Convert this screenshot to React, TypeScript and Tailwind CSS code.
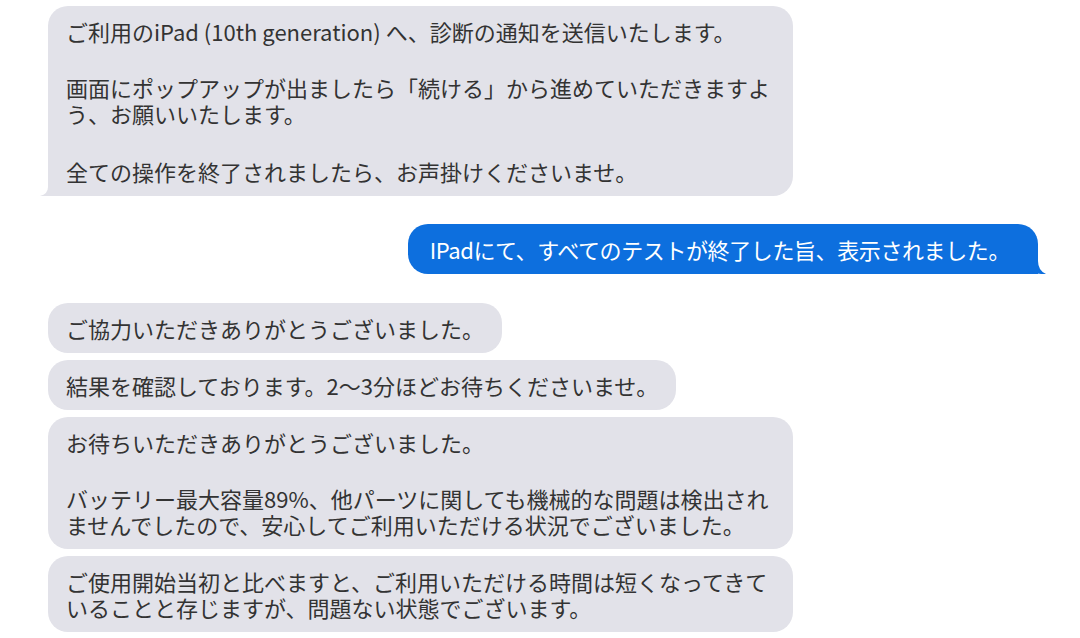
import React from 'react';

const gray = 'bg-[#e2e2e9]';

const GrayTail: React.FC = () => (
    <svg className="absolute left-[-8px] bottom-0" width="20" height="18" viewBox="0 0 20 18">
        <path d="M8 0 L8 9 Q8 16 0 18 L20 18 L20 0 Z" fill="#e2e2e9" />
    </svg>
);

const BlueTail: React.FC = () => (
    <svg className="absolute right-[-8px] bottom-0" width="22" height="26" viewBox="0 0 22 26">
        <path d="M0 0 H14 V13 Q14 22.5 22 26 Q13 26.5 7 23.5 Q4 26 0 26 Z" fill="#0d6fde" />
    </svg>
);

const Gray: React.FC<{ wide?: boolean; tail?: boolean; children: React.ReactNode }> = ({ wide, tail, children }) => (
    <div
        className={`relative ${gray} rounded-[20px] px-[18px] py-[12px] text-[22px] leading-[26px] text-[#333] whitespace-nowrap ${
            wide ? 'w-[745px]' : 'w-fit'
        } ${tail ? 'rounded-bl-none' : ''}`}
    >
        {children}
        {tail && <GrayTail />}
    </div>
);

export default function App() {
    return (
        <div
            className="w-[1080px] h-[638px] overflow-hidden bg-white pt-[6px] flex flex-col"
            style={{ fontFamily: '"Noto Sans CJK JP", "Noto Sans", sans-serif' }}
        >
            {/* received */}
            <div className="ml-[48px]">
                <Gray wide tail>
                    <p>ご利用のiPad (10th generation) へ、診断の通知を送信いたします。</p>
                    <p className="mt-[30px]">
                        画面にポップアップが出ましたら「続ける」から進めていただきますよ
                        <br />
                        う、お願いいたします。
                    </p>
                    <p className="mt-[32px]">全ての操作を終了されましたら、お声掛けくださいませ。</p>
                </Gray>
            </div>

            {/* sent */}
            <div className="mt-[28px] flex justify-end mr-[42px]">
                <div className="relative bg-[#0d6fde] text-white rounded-[20px] rounded-br-none pl-[22px] pr-[28px] py-[12px] text-[22px] leading-[26px] tracking-[-0.4px] whitespace-nowrap">
                    IPadにて、すべてのテストが終了した旨、表示されました。
                    <BlueTail />
                </div>
            </div>

            {/* received */}
            <div className="mt-[29px] ml-[48px] flex flex-col items-start gap-[7px]">
                <Gray>ご協力いただきありがとうございました。</Gray>
                <Gray>結果を確認しております。2〜3分ほどお待ちくださいませ。</Gray>
                <Gray wide>
                    <p>お待ちいただきありがとうございました。</p>
                    <p className="mt-[30px]">
                        バッテリー最大容量89%、他パーツに関しても機械的な問題は検出され
                        <br />
                        ませんでしたので、安心してご利用いただける状況でございました。
                    </p>
                </Gray>
                <Gray wide>
                    ご使用開始当初と比べますと、ご利用いただける時間は短くなってきて
                    <br />
                    いることと存じますが、問題ない状態でございます。
                </Gray>
            </div>
        </div>
    );
}
